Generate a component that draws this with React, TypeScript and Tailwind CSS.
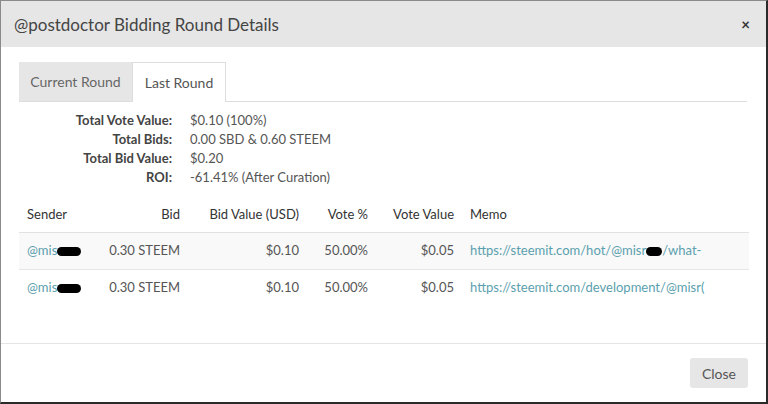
import React from "react";

const Blob = ({ w = 22 }: { w?: number }) => (
  <span
    className="inline-block h-[9px] rounded-full bg-black align-middle"
    style={{ width: w }}
  />
);

export default function App() {
  const rows = [
    { memo: "https://steemit.com/hot/@misr", memoTail: "/what-", blob: true },
    { memo: "https://steemit.com/development/@misr(", memoTail: "", blob: false },
  ];
  return (
    <div
      className="w-[768px] h-[404px] bg-white overflow-hidden flex flex-col border-l border-t border-[#8a8a8a] border-r-2 border-r-[#2a2a2a] border-b-2 border-b-[#2a2a2a] text-[#555]"
      style={{ fontFamily: "Lato, 'Open Sans', sans-serif" }}
    >
      {/* Header */}
      <div className="h-[46px] shrink-0 bg-[#e6e6e6] flex items-center justify-between pl-[13px] pr-[16px]">
        <div className="text-[17px] text-[#444] leading-none">@postdoctor Bidding Round Details</div>
        <div className="text-[15px] font-bold text-[#333] leading-none">×</div>
      </div>

      {/* Body */}
      <div className="flex-1 px-[18px] pt-[15px]">
        {/* Tabs */}
        <div className="flex h-[40px] border-b border-[#ddd] mr-[1px]">
          <div className="w-[113px] bg-[#e6e6e6] flex items-center justify-center text-[14px] text-[#666]">
            Current Round
          </div>
          <div className="w-[94px] bg-white border border-[#ddd] border-b-0 -mb-px flex items-center justify-center text-[14px] text-[#555]">
            Last Round
          </div>
        </div>

        {/* Summary */}
        <div className="mt-[9px] text-[13px] leading-[19px]">
          {[
            ["Total Vote Value:", "$0.10 (100%)"],
            ["Total Bids:", "0.00 SBD & 0.60 STEEM"],
            ["Total Bid Value:", "$0.20"],
            ["ROI:", "-61.41% (After Curation)"],
          ].map(([k, v]) => (
            <div key={k} className="flex">
              <div className="w-[153px] text-right font-bold text-[#444]">{k}</div>
              <div className="ml-[18px] text-[#555]">{v}</div>
            </div>
          ))}
        </div>

        {/* Table */}
        <table className="mt-[10px] w-[730px] text-[13px] border-collapse">
          <thead>
            <tr className="h-[35px] border-b border-[#e2e2e2] text-[#333]">
              <th className="w-[80px] px-[8px] text-left font-normal">Sender</th>
              <th className="w-[89px] px-[8px] text-right font-normal">Bid</th>
              <th className="w-[119px] px-[8px] text-right font-normal">Bid Value (USD)</th>
              <th className="w-[69px] px-[8px] text-right font-normal">Vote %</th>
              <th className="w-[86px] px-[8px] text-right font-normal">Vote Value</th>
              <th className="px-[8px] text-left font-normal">Memo</th>
            </tr>
          </thead>
          <tbody>
            {rows.map((r, i) => (
              <tr
                key={i}
                className={`h-[37px] border-b border-[#e6e6e6] ${i === 0 ? "bg-[#f9f9f9]" : "bg-white"} ${i === 1 ? "border-b-0" : ""}`}
              >
                <td className="px-[8px] whitespace-nowrap">
                  <span className="text-[#5b9fae]">@mis</span>
                  <Blob w={24} />
                </td>
                <td className="px-[8px] text-right whitespace-nowrap">0.30 STEEM</td>
                <td className="px-[8px] text-right">$0.10</td>
                <td className="px-[8px] text-right">50.00%</td>
                <td className="px-[8px] text-right">$0.05</td>
                <td className="px-[8px]">
                  <div className="w-[240px] overflow-hidden whitespace-nowrap text-[#5b9fae]">
                    {r.blob ? (
                      <>
                        {r.memo}
                        <Blob w={16} />
                        {r.memoTail}
                      </>
                    ) : (
                      r.memo
                    )}
                  </div>
                </td>
              </tr>
            ))}
          </tbody>
        </table>
      </div>

      {/* Footer */}
      <div className="h-[59px] shrink-0 border-t border-[#e5e5e5] flex items-center justify-end pr-[18px]">
        <div className="w-[58px] h-[30px] bg-[#e6e6e6] rounded-[3px] flex items-center justify-center text-[14px] text-[#555]">
          Close
        </div>
      </div>
    </div>
  );
}
